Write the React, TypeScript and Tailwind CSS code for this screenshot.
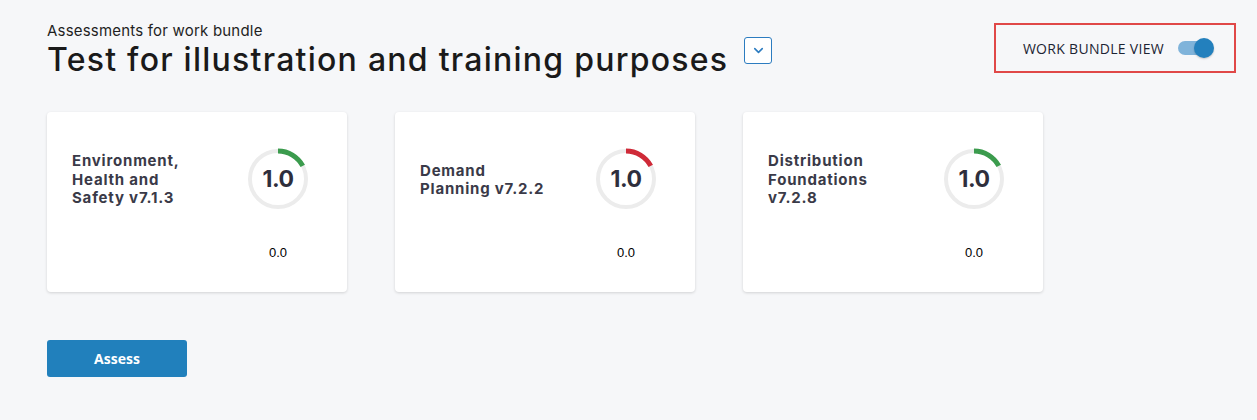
import { ChevronDown } from "lucide-react";

type Bundle = {
  title: string;
  score: string;
  arc: string;
  low: string;
};

const bundles: Bundle[] = [
  { title: "Environment, Health and Safety v7.1.3", score: "1.0", arc: "#3b9b4d", low: "0.0" },
  { title: "Demand Planning v7.2.2", score: "1.0", arc: "#cf2a38", low: "0.0" },
  { title: "Distribution Foundations v7.2.8", score: "1.0", arc: "#3b9b4d", low: "0.0" },
];

function ScoreRing({ value, color }: { value: string; color: string }) {
  const r = 28;
  const c = 2 * Math.PI * r;
  const part = c * (62 / 360);
  return (
    <div className="relative w-[62px] h-[62px]">
      <svg width="62" height="62" viewBox="0 0 62 62" className="-rotate-90">
        <circle cx="31" cy="31" r={r} fill="none" stroke="#ececec" strokeWidth="4" />
        <circle
          cx="31"
          cy="31"
          r={r}
          fill="none"
          stroke={color}
          strokeWidth="5"
          strokeDasharray={`${part} ${c}`}
        />
      </svg>
      <div className="absolute inset-0 flex items-center justify-center text-[23px] font-bold text-[#2e2e3c] tracking-[-0.5px]">
        {value}
      </div>
    </div>
  );
}

function BundleCard({ item }: { item: Bundle }) {
  return (
    <div className="w-[300px] h-[180px] bg-white rounded-[4px] shadow-[0_1px_3px_rgba(0,0,0,0.15)] pl-[25px] pr-[38px] pt-[36px] flex justify-between">
      <div className="w-[135px] h-[64px] flex items-center">
        <p className="text-[15px] leading-[18.5px] font-bold text-[#3a3a48] tracking-[0.8px]">{item.title}</p>
      </div>
      <div className="flex flex-col items-center">
        <ScoreRing value={item.score} color={item.arc} />
        <p className="mt-[33px] text-[13px] text-black font-['Liberation_Sans',sans-serif]">{item.low}</p>
      </div>
    </div>
  );
}

export default function App() {
  return (
    <div className="min-h-screen w-full bg-[#f6f7f9] font-['Inter',sans-serif] relative">
      <div className="pl-[47px] pr-[21px] pt-[22px] flex justify-between items-start">
        <div>
          <p className="text-[15px] leading-[18px] text-[#1f1f1f] tracking-[0.2px]">Assessments for work bundle</p>
          <div className="flex items-start gap-[16px]">
            <h1 className="text-[32px] leading-[40px] font-medium text-[#1a1a1a] tracking-[1.25px]">
              Test for illustration and training purposes
            </h1>
            <button className="mt-[-3px] w-[28px] h-[27px] bg-white border-[1.5px] border-[#2c7cc0] rounded-[3px] flex items-center justify-center text-[#2c7cc0]">
              <ChevronDown size={15} strokeWidth={2.5} />
            </button>
          </div>
        </div>
        <div className="mt-[1px] w-[242px] h-[50px] border-2 border-[#e04848] flex items-center justify-end pr-[20px] gap-[14px]">
          <span className="text-[14px] text-[#1c2433] font-['Open_Sans',sans-serif] tracking-[0.3px]">WORK BUNDLE VIEW</span>
          <div className="relative w-[36px] h-[20px] flex items-center">
            <div className="w-[32px] h-[14px] rounded-full bg-[#7fb3da]" />
            <div className="absolute right-0 top-0 w-[20px] h-[20px] rounded-full bg-[#2380bd] shadow-[0_1px_2px_rgba(0,0,0,0.2)]" />
          </div>
        </div>
      </div>

      <div className="pl-[47px] mt-[32px] flex gap-[48px]">
        {bundles.map((b) => (
          <BundleCard key={b.title} item={b} />
        ))}
      </div>

      <div className="pl-[47px] mt-[48px]">
        <button className="w-[140px] h-[37px] bg-[#2180bc] rounded-[3px] text-white text-[14px] font-bold font-['Open_Sans',sans-serif]">
          Assess
        </button>
      </div>
    </div>
  );
}
